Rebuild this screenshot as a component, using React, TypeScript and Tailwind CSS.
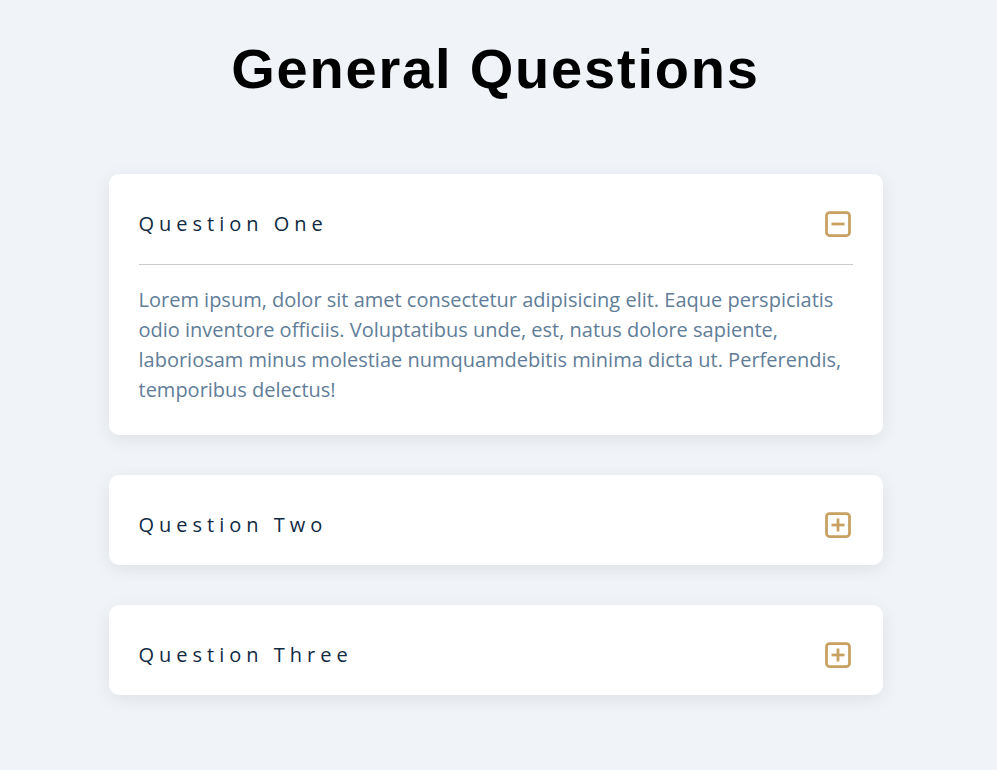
import { useState } from 'react'

const questions = [
  {
    title: 'Question One',
    body: 'Lorem ipsum, dolor sit amet consectetur adipisicing elit. Eaque perspiciatis odio inventore officiis. Voluptatibus unde, est, natus dolore sapiente, laboriosam minus molestiae numquamdebitis minima dicta ut. Perferendis, temporibus delectus!',
  },
  {
    title: 'Question Two',
    body: 'Lorem ipsum, dolor sit amet consectetur adipisicing elit. Eaque perspiciatis odio inventore officiis. Voluptatibus unde, est, natus dolore sapiente, laboriosam minus molestiae numquamdebitis minima dicta ut. Perferendis, temporibus delectus!',
  },
  {
    title: 'Question Three',
    body: 'Lorem ipsum, dolor sit amet consectetur adipisicing elit. Eaque perspiciatis odio inventore officiis. Voluptatibus unde, est, natus dolore sapiente, laboriosam minus molestiae numquamdebitis minima dicta ut. Perferendis, temporibus delectus!',
  },
]

function ToggleIcon({ open }: { open: boolean }) {
  return (
    <svg width="26" height="26" viewBox="0 0 26 26" fill="none" stroke="#c8a062" strokeWidth="2.75" aria-hidden="true">
      <rect x="1.5" y="1.5" width="23" height="23" rx="3" />
      <path d="M6.5 13h13" />
      {open ? null : <path d="M13 6.5v13" />}
    </svg>
  )
}

function Question({ title, body, defaultOpen = false }: { title: string; body: string; defaultOpen?: boolean }) {
  const [open, setOpen] = useState(defaultOpen)

  return (
    <article className="rounded-[10px] bg-white px-[30px] shadow-[0_4px_18px_rgba(0,0,0,0.08)]">
      <div className="flex h-[90px] items-center justify-between pt-[10px]">
        <h3 className="text-[20px] font-normal tracking-[5px] text-[#102a43]">{title}</h3>
        <button type="button" onClick={() => setOpen(!open)} className="mr-[2px] flex items-center">
          <ToggleIcon open={open} />
        </button>
      </div>
      {open ? (
        <p className="border-t border-[#cbcbcb] pt-[20px] pb-[30px] text-[20px] leading-[30px] text-[#617d98]">{body}</p>
      ) : null}
    </article>
  )
}

export default function App() {
  return (
    <main className="min-h-[770px] bg-[#f0f4f8] pt-[37px] pr-[6px] font-['Open_Sans',sans-serif]">
      <h1 className="text-center font-['Liberation_Sans',Arial,sans-serif] text-[56px] leading-[64px] font-bold tracking-[1.8px] text-black">
        General Questions
      </h1>
      <section className="mx-auto mt-[73px] flex w-[774px] flex-col gap-[40px]">
        {questions.map((q, i) => (
          <Question key={q.title} title={q.title} body={q.body} defaultOpen={i === 0} />
        ))}
      </section>
    </main>
  )
}
